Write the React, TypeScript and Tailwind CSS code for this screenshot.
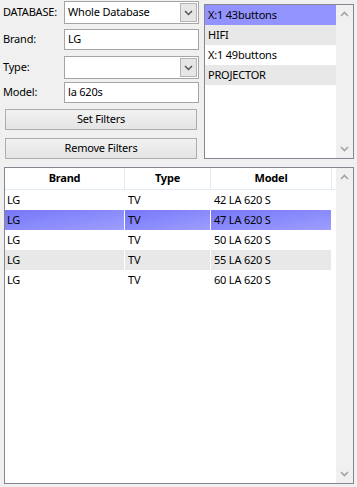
const listItems = [
  { label: "X:1 43buttons", selected: true },
  { label: "HIFI", alt: true },
  { label: "X:1 49buttons" },
  { label: "PROJECTOR", alt: true },
];

const rows = [
  { brand: "LG", type: "TV", model: "42 LA 620 S" },
  { brand: "LG", type: "TV", model: "47 LA 620 S", selected: true },
  { brand: "LG", type: "TV", model: "50 LA 620 S" },
  { brand: "LG", type: "TV", model: "55 LA 620 S", alt: true },
  { brand: "LG", type: "TV", model: "60 LA 620 S" },
];

const Chevron = ({ up }: { up?: boolean }) => (
  <svg width="9" height="6" viewBox="0 0 9 6" className={up ? "rotate-180" : ""}>
    <path d="M1 1 L4.5 4.5 L8 1" fill="none" stroke="#a3a3a3" strokeWidth="1.6" />
  </svg>
);

const Combo = ({ value }: { value: string }) => (
  <div className="flex h-[23px] w-[135px] border border-[#a5a5a5] bg-white">
    <div className="flex flex-1 items-center pl-[3px]">{value}</div>
    <div className="m-[1px] flex w-[17px] items-center justify-center border border-[#b4b4b4] bg-[#e6e6e6]">
      <svg width="9" height="6" viewBox="0 0 9 6">
        <path d="M1 1 L4.5 4.5 L8 1" fill="none" stroke="#555" strokeWidth="1.5" />
      </svg>
    </div>
  </div>
);

const TextBox = ({ value }: { value: string }) => (
  <div className="flex h-[21px] w-[135px] items-center border border-[#a5a5a5] bg-white pl-[3px]">
    {value}
  </div>
);

const Button = ({ label }: { label: string }) => (
  <div className="ml-[2px] flex h-[21px] w-[192px] items-center justify-center border border-[#adadad] bg-gradient-to-b from-[#f2f2f2] to-[#e4e4e4]">
    {label}
  </div>
);

export default function App() {
  return (
    <div className="h-[487px] w-[357px] overflow-hidden bg-[#f0f0f0] text-[11px] tracking-[-0.2px] text-black font-['Noto_Sans','Liberation_Sans',sans-serif]">
      <div className="flex">
        {/* filters */}
        <div className="ml-[3px] flex w-[196px] flex-col">
          <div className="mt-[1px] flex items-center">
            <span className="w-[61px]">DATABASE:</span>
            <Combo value="Whole Database" />
          </div>
          <div className="mt-[5px] flex items-center">
            <span className="w-[61px]">Brand:</span>
            <TextBox value="LG" />
          </div>
          <div className="mt-[6px] flex items-center">
            <span className="w-[61px]">Type:</span>
            <Combo value="" />
          </div>
          <div className="mt-[3px] flex items-center">
            <span className="w-[61px]">Model:</span>
            <TextBox value="la 620s" />
          </div>
          <div className="mt-[6px]">
            <Button label="Set Filters" />
          </div>
          <div className="mt-[8px]">
            <Button label="Remove Filters" />
          </div>
        </div>

        {/* list box */}
        <div className="ml-[5px] mt-[4px] flex h-[155px] w-[150px] border border-[#828790] bg-white">
          <div className="flex-1">
            {listItems.map((it, i) => (
              <div
                key={i}
                className={`flex h-[20px] items-center pl-[3px] ${
                  it.selected ? "bg-[#9393ff]" : it.alt ? "bg-[#e8e8e8]" : "bg-white"
                }`}
              >
                {it.label}
              </div>
            ))}
          </div>
          <div className="flex w-[17px] flex-col items-center justify-between bg-[#f0f0f0] py-[6px]">
            <Chevron up />
            <Chevron />
          </div>
        </div>
      </div>

      {/* results table */}
      <div className="ml-[4px] mt-[8px] flex h-[317px] w-[350px] border border-[#828790] bg-white">
        <div className="flex-1">
          <div className="grid h-[22px] grid-cols-[120px_86px_121px_1fr] border-b border-[#e3ebf5] font-bold">
            <div className="flex items-center justify-center border-r border-[#e3ebf5]">Brand</div>
            <div className="flex items-center justify-center border-r border-[#e3ebf5]">Type</div>
            <div className="flex items-center justify-center border-r border-[#e3ebf5]">Model</div>
            <div />
          </div>
          {rows.map((r, i) => (
            <div key={i} className="grid h-[20px] grid-cols-[120px_86px_121px_1fr]">
              {[r.brand, r.type, r.model].map((c, j) => (
                <div
                  key={j}
                  className={`flex items-center border-r border-white ${j === 0 ? "pl-[2px]" : "pl-[3px]"} ${
                    r.selected
                      ? "bg-gradient-to-br from-[#7676f8] to-[#9e9eff]"
                      : r.alt
                      ? "bg-[#e8e8e8]"
                      : "bg-white"
                  }`}
                >
                  {c}
                </div>
              ))}
              <div />
            </div>
          ))}
        </div>
        <div className="flex w-[17px] flex-col items-center justify-between bg-[#f0f0f0] py-[6px]">
          <Chevron up />
          <Chevron />
        </div>
      </div>
    </div>
  );
}
